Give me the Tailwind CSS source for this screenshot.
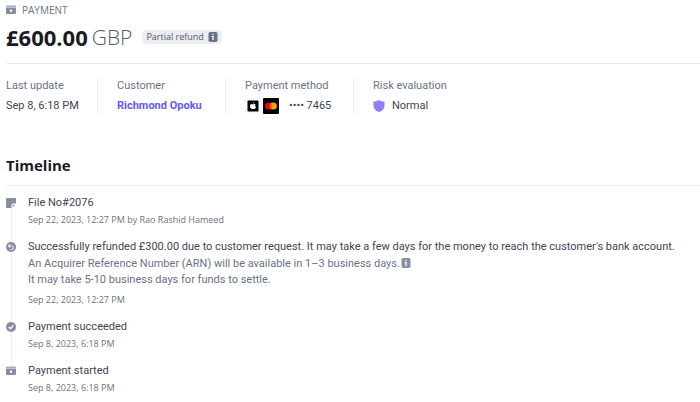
<!DOCTYPE html>
<html lang="en">
<head>
<meta charset="utf-8">
<meta name="viewport" content="width=device-width, initial-scale=1">
<title>Payment</title>
<script src="https://cdn.jsdelivr.net/npm/@tailwindcss/browser@4"></script>
</head>
<body class="bg-white font-[Roboto,'Noto_Sans',sans-serif] text-[11px] leading-4 text-[#414552]">
<svg class="hidden" aria-hidden="true">
  <symbol id="cash" viewBox="0 0 10 10"><path fill="#a3acba" d="M1 .5h8a1 1 0 0 1 1 1V2H0v-.5a1 1 0 0 1 1-1z"/><path fill="#878da0" fill-rule="evenodd" d="M0 2.600h10V8a1 1 0 0 1-1 1H1a1 1 0 0 1-1-1zm5 2a1.200 1.200 0 1 0 0 2.400 1.200 1.200 0 0 0 0-2.400z"/></symbol>
  <symbol id="info" viewBox="0 0 10 10"><rect width="9" height="10" x=".5" rx="1.8" fill="currentColor"/><path fill="#fff" d="M4.300 1.700h1.400V3H4.300zM3.600 4h2.100v4H4.400V5h-.8z"/></symbol>
</svg>
<main class="pl-1.5">
  <header class="flex flex-col border-b border-[#ebeef1] pt-0.5 pb-3 font-['Open_Sans','Noto_Sans',sans-serif]">
    <div class="flex items-center gap-1.5 text-[10px] font-medium text-[#687385]">
      <svg class="size-2.5"><use href="#cash"/></svg>
      <span>PAYMENT</span>
    </div>
    <div class="mt-[5px] flex items-center gap-2.5">
      <h1 class="flex items-center gap-1 text-[22px] leading-7 font-bold text-[#1a1b25]">£600.00<span class="text-[21px] font-light text-[#545969]">GBP</span></h1>
      <span class="flex h-3.5 items-center gap-1 rounded bg-[#ebeef1] px-1 text-[9px] font-medium text-[#545969]">Partial refund
        <svg class="size-2.5 text-[#687385]" role="img" aria-label="More information"><use href="#info"/></svg>
      </span>
    </div>
  </header>

  <dl class="mt-[14px] flex">
    <div class="w-[92px] border-r border-[#ebeef1]"><dt class="text-[#687385]">Last update</dt><dd class="mt-1">Sep 8, 6:18 PM</dd></div>
    <div class="w-32 border-r border-[#ebeef1] pl-[19px]"><dt class="text-[#687385]">Customer</dt><dd class="mt-1"><a href="#" class="font-bold text-[#625afa]">Richmond Opoku</a></dd></div>
    <div class="w-32 border-r border-[#ebeef1] pl-[19px]"><dt class="text-[#687385]">Payment method</dt>
      <dd class="mt-1 flex items-center gap-0.5">
        <svg class="size-4" viewBox="0 0 16 16" role="img" aria-label="Apple Pay"><rect width="16" height="16" rx="2" fill="#f6f8fa"/><rect x="2.500" y="2.500" width="11" height="11" rx="1" fill="#000"/><path fill="#fff" d="M8 5.600c0-.9.6-1.500 1.300-1.600 0 .9-.6 1.500-1.300 1.600zM10.700 6.500c-.9.6-.7 2 .3 2.400-.4 1.100-1 2.100-1.700 2.100-.5 0-.7-.3-1.300-.3s-.8.3-1.300.3C5.700 11 4.900 9.300 4.900 8.100c0-1.400.9-2.200 1.800-2.200.6 0 .9.3 1.300.3s.9-.3 1.500-.3c.5 0 .9.200 1.200.6z"/></svg>
        <svg class="size-4" viewBox="0 0 16 16" role="img" aria-label="Mastercard"><rect width="16" height="16" rx="1" fill="#000"/><circle cx="5.700" cy="8" r="3.600" fill="#eb001b"/><circle cx="10.300" cy="8" r="3.600" fill="#f79e1b"/><path fill="#ff5f00" d="M8 5.200a3.600 3.600 0 0 1 0 5.600 3.600 3.600 0 0 1 0-5.600z"/></svg>
        <span class="ml-2">•••• 7465</span>
      </dd></div>
    <div class="pl-[19px]"><dt class="text-[#687385]">Risk evaluation</dt>
      <dd class="mt-1 flex items-center gap-[7px]">
        <svg class="size-3" viewBox="0 0 12 12" aria-hidden="true"><path fill="#8d7ffa" d="M6 0c1.500 1 3.300 1.500 5.500 1.500v4C11.500 8.500 9.500 11 6 12 2.500 11 .5 8.500.5 5.500v-4C2.700 1.500 4.500 1 6 0z"/></svg>Normal
      </dd></div>
  </dl>

  <section>
    <h2 class="mt-[39px] border-b border-[#ebeef1] pb-2 font-['Open_Sans','Noto_Sans',sans-serif] text-[15px] leading-6 font-bold text-[#1a1b25]">Timeline</h2>
    <ol class="mt-[9px]">
      <li class="flex gap-3">
        <div class="flex w-2.5 shrink-0 flex-col items-center">
          <svg class="mt-[3px] size-2.5 shrink-0" viewBox="0 0 10 10" aria-hidden="true"><path fill="#878da0" d="M1 0h8a1 1 0 0 1 1 1v4.500H7A1.500 1.500 0 0 0 5.500 7v3H1a1 1 0 0 1-1-1V1a1 1 0 0 1 1-1z"/><path fill="#878da0" d="M6.700 9.200V7.200a.5.5 0 0 1 .5-.5h2z"/></svg>
          <span class="-mb-[3px] w-px grow bg-[#ebeef1]"></span>
        </div>
        <div class="pb-[11px]"><p>File No#2076</p><p class="mt-px font-['Open_Sans','Noto_Sans',sans-serif] text-[9px] text-[#687385]">Sep 22, 2023, 12:27 PM by Rao Rashid Hameed</p></div>
      </li>
      <li class="flex gap-3">
        <div class="flex w-2.5 shrink-0 flex-col items-center">
          <svg class="mt-[3px] size-2.5 shrink-0" viewBox="0 0 10 10" aria-hidden="true"><circle cx="5" cy="5" r="5" fill="#878da0"/><path fill="none" stroke="#fff" stroke-width=".9" d="M2.500 4h3.200a1.800 1.800 0 0 1 0 3.600H4.500M4.300 2 2.300 4l2 2"/></svg>
          <span class="-mb-[3px] w-px grow bg-[#ebeef1]"></span>
        </div>
        <div class="pb-[11px]"><p>Successfully refunded £300.00 due to customer request. It may take a few days for the money to reach the customer's bank account.</p>
          <p class="mt-px text-[#687385]">An Acquirer Reference Number (ARN) will be available in 1–3 business days.<svg class="ml-px inline size-2.5 align-[-1px] text-[#878da0]" role="img" aria-label="More information"><use href="#info"/></svg><br>It may take 5-10 business days for funds to settle.</p>
          <p class="mt-1 font-['Open_Sans','Noto_Sans',sans-serif] text-[9px] text-[#687385]">Sep 22, 2023, 12:27 PM</p></div>
      </li>
      <li class="flex gap-3">
        <div class="flex w-2.5 shrink-0 flex-col items-center">
          <svg class="mt-[3px] size-2.5 shrink-0" viewBox="0 0 10 10" aria-hidden="true"><circle cx="5" cy="5" r="5" fill="#878da0"/><path fill="none" stroke="#fff" stroke-width="1.300" d="m2.700 5 1.700 1.700 3-3.200"/></svg>
          <span class="-mb-[3px] w-px grow bg-[#ebeef1]"></span>
        </div>
        <div class="pb-[11px]"><p>Payment succeeded</p><p class="mt-px font-['Open_Sans','Noto_Sans',sans-serif] text-[9px] text-[#687385]">Sep 8, 2023, 6:18 PM</p></div>
      </li>
      <li class="flex gap-3">
        <div class="w-2.5 shrink-0"><svg class="mt-[3px] size-2.5"><use href="#cash"/></svg></div>
        <div><p>Payment started</p><p class="mt-px font-['Open_Sans','Noto_Sans',sans-serif] text-[9px] text-[#687385]">Sep 8, 2023, 6:18 PM</p></div>
      </li>
    </ol>
  </section>
</main>
</body>
</html>
